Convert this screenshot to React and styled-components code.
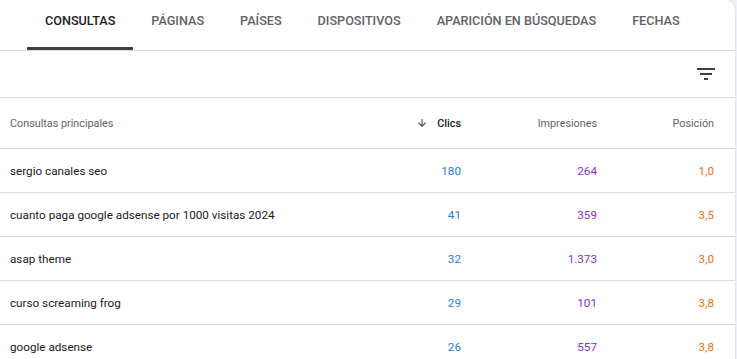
import styled, { createGlobalStyle } from "styled-components";

const GlobalStyle = createGlobalStyle`
  html, body {
    margin: 0;
    padding: 0;
    background: #eef3fb;
    font-family: Roboto, "Liberation Sans", Arial, sans-serif;
  }
`;

const Card = styled.div`
  width: 735px;
  height: 359px;
  overflow: hidden;
  background: #fff;
  border-top-right-radius: 10px;
  box-shadow: 1px 0 1px rgba(60, 64, 67, 0.08);
`;

const TabBar = styled.div`
  display: flex;
  padding-left: 27px;
  height: 50px;
  border-bottom: 1px solid #dadce0;
`;

const Tab = styled.div`
  position: relative;
  display: flex;
  align-items: center;
  padding: 0 18px 10px;
  font-size: 12.65px;
  font-weight: 500;
  color: ${(p) => (p.$active ? "#202124" : "#5f6368")};
  text-transform: uppercase;
  white-space: nowrap;
  &::after {
    content: "";
    display: ${(p) => (p.$active ? "block" : "none")};
    position: absolute;
    left: 0;
    right: 0;
    bottom: 0;
    height: 3px;
    background: #3c4043;
  }
`;

const Toolbar = styled.div`
  display: flex;
  justify-content: flex-end;
  align-items: center;
  height: 46px;
  padding-right: 20px;
  border-bottom: 1px solid #dadce0;
`;

const Row = styled.div`
  display: grid;
  grid-template-columns: 1fr 120px 136px 117px;
  align-items: center;
  height: ${(p) => (p.$head ? "50px" : "43px")};
  padding: 0 21px 0 10px;
  border-bottom: 1px solid #dadce0;
  font-size: ${(p) => (p.$head ? "10.8px" : "11.7px")};
  color: ${(p) => (p.$head ? "#5f6368" : "#202124")};
`;

const Cell = styled.div`
  text-align: right;
  color: ${(p) => p.$color || "inherit"};
  font-weight: ${(p) => (p.$bold ? 500 : 400)};
  display: flex;
  justify-content: flex-end;
  align-items: center;
  gap: 9px;
`;

const Query = styled.div`
  white-space: nowrap;
`;

const FilterIcon = () => (
  <svg width="18" height="12" viewBox="0 0 18 12">
    <rect x="0" y="0" width="18" height="2" fill="#3c4043" />
    <rect x="3" y="5" width="12" height="2" fill="#3c4043" />
    <rect x="7" y="10" width="4" height="2" fill="#3c4043" />
  </svg>
);

const ArrowDown = () => (
  <svg width="12" height="12" viewBox="0 0 24 24">
    <path
      d="M20 12l-1.41-1.41L13 16.17V4h-2v12.17l-5.58-5.59L4 12l8 8 8-8z"
      fill="#3c4043"
    />
  </svg>
);

const tabs = [
  "Consultas",
  "Páginas",
  "Países",
  "Dispositivos",
  "Aparición en búsquedas",
  "Fechas",
];

const rows = [
  ["sergio canales seo", "180", "264", "1,0"],
  ["cuanto paga google adsense por 1000 visitas 2024", "41", "359", "3,5"],
  ["asap theme", "32", "1.373", "3,0"],
  ["curso screaming frog", "29", "101", "3,8"],
  ["google adsense", "26", "557", "3,8"],
];

export default function App() {
  return (
    <>
      <GlobalStyle />
      <Card>
        <TabBar>
          {tabs.map((t, i) => (
            <Tab key={t} $active={i === 0}>
              {t}
            </Tab>
          ))}
        </TabBar>
        <Toolbar>
          <FilterIcon />
        </Toolbar>
        <Row $head>
          <Query>Consultas principales</Query>
          <Cell $color="#202124" $bold>
            <ArrowDown />
            Clics
          </Cell>
          <Cell>Impresiones</Cell>
          <Cell>Posición</Cell>
        </Row>
        {rows.map((r) => (
          <Row key={r[0]}>
            <Query>{r[0]}</Query>
            <Cell $color="#2a7de8">{r[1]}</Cell>
            <Cell $color="#8a33cc">{r[2]}</Cell>
            <Cell $color="#e8710a">{r[3]}</Cell>
          </Row>
        ))}
      </Card>
    </>
  );
}
